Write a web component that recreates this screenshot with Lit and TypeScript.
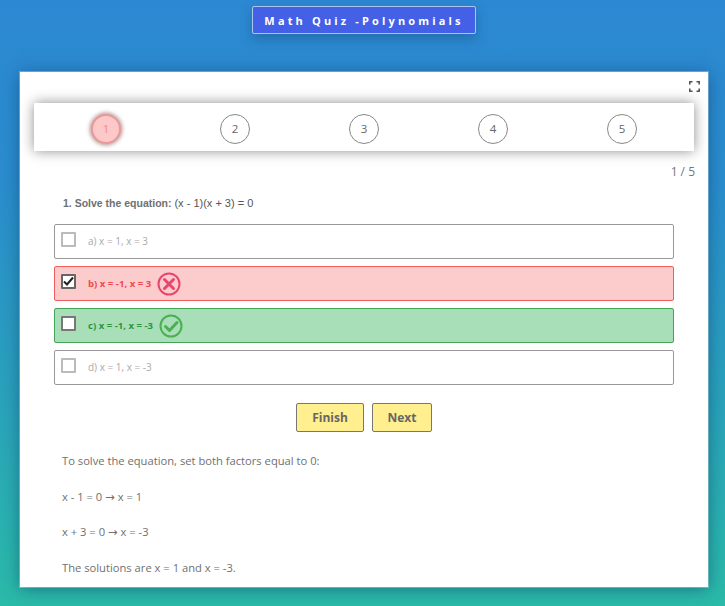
import { LitElement, html, css, svg } from "lit";
import { customElement } from "lit/decorators.js";

const cross = svg`<svg class="mark" width="24" height="24" viewBox="0 0 24 24" fill="none" stroke="#e8466e" stroke-width="2"><circle cx="12" cy="12" r="10.500"/><path d="M7.500 7.500l9 9M16.500 7.500l-9 9" stroke-width="3" stroke-linecap="round"/></svg>`;
const check = svg`<svg class="mark" width="24" height="24" viewBox="0 0 24 24" fill="none" stroke="#4caf50" stroke-width="2"><circle cx="12" cy="12" r="10.500"/><path d="M6.500 12.500l4 4 7.500-8" stroke-width="3" stroke-linecap="round" stroke-linejoin="round"/></svg>`;

@customElement("app-root")
export class AppRoot extends LitElement {
  static styles = css`
    :host { display: block; width: 725px; height: 606px; overflow: hidden;
      background: linear-gradient(180deg, #2c88d2 0%, #2a8dce 30%, #2aa2bc 65%, #2abba8 100%);
      font-family: "Open Sans", sans-serif; color: #666; }
    .wrap { display: flex; flex-direction: column; align-items: center; padding-top: 6px; }
    .title { box-sizing: border-box; width: 224px; height: 28px; margin-left: 3px; display: flex; align-items: center; justify-content: center;
      background: #4460e6; border: 1px solid #a9c6ee; border-radius: 2px; color: #fff; font-weight: 700; font-size: 11px;
      letter-spacing: 3.15px; white-space: pre; box-shadow: 0 5px 12px rgba(20,60,110,.35); }
    .card { box-sizing: border-box; position: relative; width: 688px; height: 515px; margin-top: 38px; margin-left: 3px; background: #fff;
      padding: 31px 14px 0; box-shadow: 0 0 0 1px rgba(255,255,255,.3), 0 2px 16px rgba(10,50,90,.5); overflow: hidden; }
    .fs { position: absolute; top: 9px; right: 8px; }
    .steps { box-sizing: border-box; height: 48px; padding-top: 3px; display: grid; grid-template-columns: repeat(5, 129px); justify-content: center; align-items: center;
      box-shadow: 0 0 12px rgba(0,0,0,.45); background: #fff; }
    .step { box-sizing: border-box; width: 30px; height: 30px; justify-self: center; border: 1px solid #888; border-radius: 50%;
      display: flex; align-items: center; justify-content: center; font-size: 11.5px; color: #666; }
    .step.on { background: #fcc8c8; border: 2px solid #e89a9a; color: #f08c8c; box-shadow: 0 0 4px 1px rgba(130,60,60,.6); }
    .count { text-align: right; font-size: 12px; color: #6b7a86; margin: 12px -1px 0 0; line-height: 17px; }
    .q { font-family: "Liberation Sans", sans-serif; font-size: 10.5px; font-weight: 700; color: #707070; margin: 16px 0 0 29px; line-height: 14px; }
    .q span { font-weight: 400; font-size: 11px; color: #555; }
    .opts { display: flex; flex-direction: column; gap: 7px; margin: 14px 20px 0; }
    .opt { box-sizing: border-box; height: 35px; border: 1px solid #999; border-radius: 2px; display: flex; align-items: center;
      padding: 0 0 2px 6px; font-size: 10px; color: #aaa; background: #fff; }
    .box { box-sizing: border-box; width: 15px; height: 15px; border: 2px solid #bbb; border-radius: 1px; background: #fff; margin: -3px 12px 0 0; flex: none; display: flex; }
    .opt.bad { background: #fccbcb; border-color: #f25d5d; color: #f0484e; font-weight: 700; font-size: 9.600px; padding-bottom: 0; }
    .opt.bad .box { border-color: #666; margin-top: -5px; }
    .opt.good { background: #a8dfb9; border-color: #43a455; color: #2e9443; font-weight: 700; font-size: 9.600px; padding-bottom: 0; }
    .opt.good .box { border-color: #777; margin-top: -5px; }
    .mark { margin-left: 6px; flex: none; }
    .btns { display: flex; justify-content: center; gap: 8px; margin-top: 18px; }
    .btn { box-sizing: border-box; width: 68px; height: 29px; display: flex; align-items: center; justify-content: center;
      background: #ffef8e; border: 1px solid #777; border-radius: 2px; font-size: 12px; font-weight: 700; color: #666; }
    .btn.n { width: 60px; }
    .exp { margin: 22px 0 0 28px; font-size: 11.200px; line-height: 14px; color: #707070; }
    .exp p { margin: 0 0 21.500px; }
    .arrow { font-family: "DejaVu Sans", sans-serif; font-size: 11.500px; line-height: 0; }
  `;

  render() {
    return html`<div class="wrap">
      <div class="title">Math Quiz -Polynomials</div>
      <div class="card">
        <svg class="fs" width="11" height="11" viewBox="0 0 11 11" fill="none" stroke="#555" stroke-width="1.6"><path d="M.8 3.500V.8h2.700M7.500.8h2.700v2.700M10.200 7.500v2.700H7.500M3.500 10.200H.8V7.500"/></svg>
        <div class="steps">
          <div class="step on">1</div><div class="step">2</div><div class="step">3</div><div class="step">4</div><div class="step">5</div>
        </div>
        <div class="count">1 / 5</div>
        <div class="q">1. Solve the equation: <span>(x - 1)(x + 3) = 0</span></div>
        <div class="opts">
          <div class="opt"><span class="box"></span>a) x = 1, x = 3</div>
          <div class="opt bad"><span class="box"><svg width="11" height="11" viewBox="0 0 11 11" fill="none" stroke="#222" stroke-width="2"><path d="M1 5.500l3 3 6-7"/></svg></span>b) x = -1, x = 3${cross}</div>
          <div class="opt good"><span class="box"></span>c) x = -1, x = -3${check}</div>
          <div class="opt"><span class="box"></span>d) x = 1, x = -3</div>
        </div>
        <div class="btns"><div class="btn">Finish</div><div class="btn n">Next</div></div>
        <div class="exp">
          <p>To solve the equation, set both factors equal to 0:</p>
          <p>x - 1 = 0 <span class="arrow">→</span> x = 1</p>
          <p>x + 3 = 0 <span class="arrow">→</span> x = -3</p>
          <p>The solutions are x = 1 and x = -3.</p>
        </div>
      </div>
    </div>`;
  }
}
